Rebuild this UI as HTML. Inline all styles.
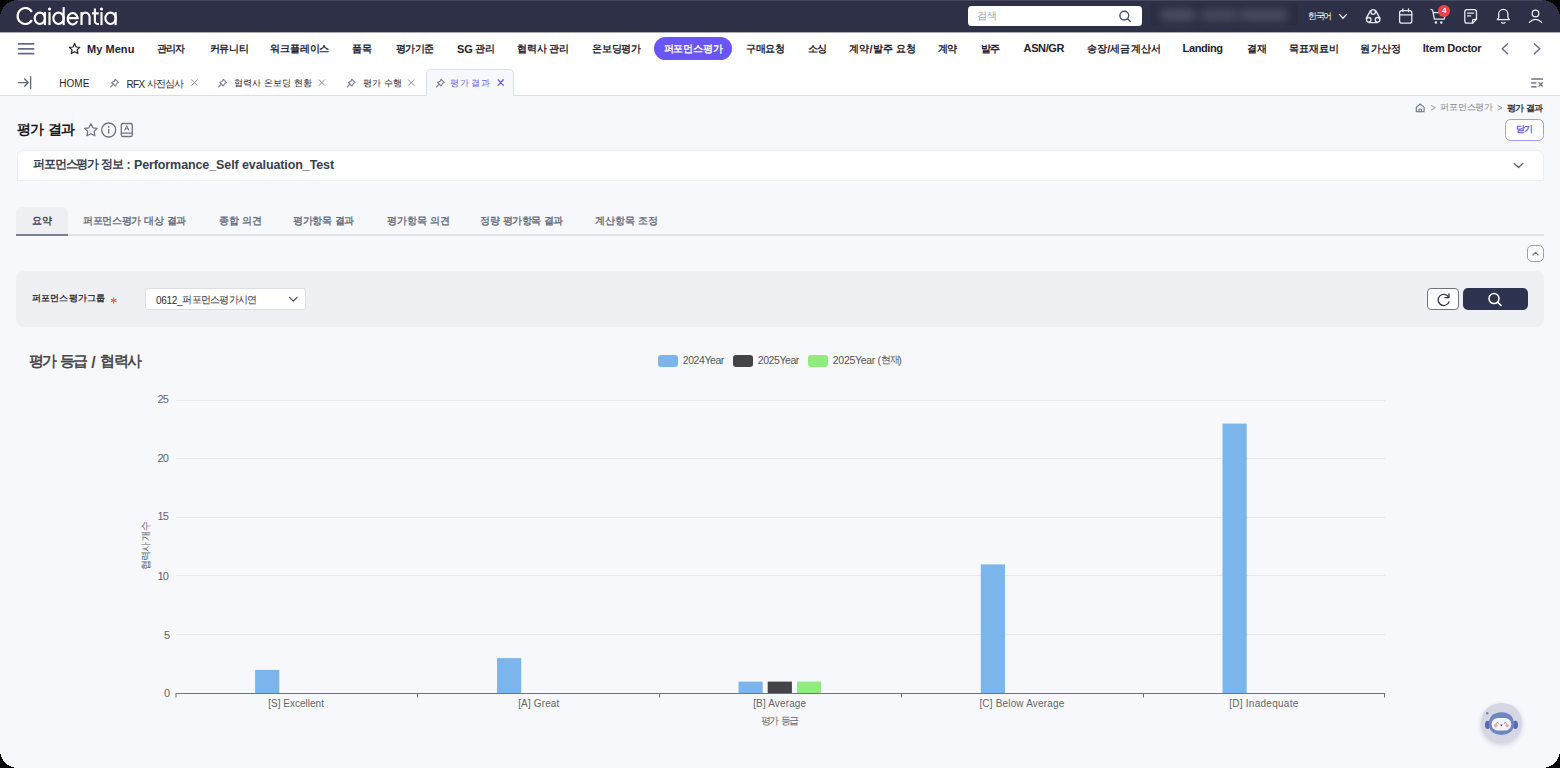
<!DOCTYPE html>
<html><head><meta charset="utf-8">
<style>
*{box-sizing:border-box;margin:0;padding:0}
html,body{width:1560px;height:768px;overflow:hidden;background:#000;font-family:"Liberation Sans",sans-serif;}
#app{position:absolute;left:0;top:0;width:1560px;height:768px;overflow:hidden;background:#f7f8fc;}
.a{position:absolute}
.t{position:absolute;white-space:nowrap;line-height:1.25}
svg{position:absolute;overflow:visible}
.k{vertical-align:0.1em}

</style></head>
<body>
<div id="app">
<!-- header -->
<div class="a" style="left:0;top:0;width:1560px;height:32px;background:#2e3047"></div>
<div class="a" style="left:18px;top:0;width:1524px;height:1px;background:#46485d"></div>
<div class="a" style="left:0;top:32px;width:1560px;height:1px;background:#a9abb6"></div>
<svg style="left:0;top:0" width="130" height="32" fill="none" stroke="#fff" stroke-width="2.15">
  <path d="M31.9 11.9 A7.7 7.95 0 1 0 31.9 20.1"/>
  <ellipse cx="39.8" cy="18.25" rx="5.1" ry="5.7"/>
  <line x1="44.9" y1="11.9" x2="44.9" y2="25.1"/>
  <line x1="49.5" y1="12.1" x2="49.5" y2="25.1"/>
  <circle cx="49.5" cy="9" r="1.55" fill="#fff" stroke="none"/>
  <ellipse cx="58.5" cy="18.25" rx="5.15" ry="5.7"/>
  <line x1="63.65" y1="7.1" x2="63.65" y2="25.1"/>
  <path d="M67.6 18.1 H77.65 A5 5.7 0 1 0 77.2 21.2"/>
  <path d="M81.5 11.9 V25.1 M81.5 17.2 A4.05 4.65 0 0 1 89.6 17.2 V25.1"/>
  <path d="M94.9 8.5 V21.2 A2.6 2.6 0 0 0 97.5 23.95 H98.9 M92 13.3 H98.7"/>
  <line x1="101.5" y1="12.1" x2="101.5" y2="25.1"/>
  <circle cx="101.5" cy="9" r="1.55" fill="#fff" stroke="none"/>
  <ellipse cx="110.5" cy="18.25" rx="5.15" ry="5.7"/>
  <line x1="115.65" y1="11.9" x2="115.65" y2="25.1"/>
</svg>
<!-- search -->
<div class="a" style="left:967.6px;top:6.3px;width:174px;height:19.7px;background:#fff;border-radius:3.5px"></div>
<svg style="left:0;top:0" width="1560" height="40">
  <circle cx="1124.3" cy="15.6" r="4.4" fill="none" stroke="#4a5060" stroke-width="1.4"/>
  <line x1="1127.5" y1="18.8" x2="1130.3" y2="21.6" stroke="#4a5060" stroke-width="1.4" stroke-linecap="round"/>
</svg>
<!-- blurred user -->
<div class="a" style="left:1151px;top:4px;width:147px;height:21px;background:#2b2d41"></div>
<div class="a" style="left:1160px;top:9px;width:36px;height:12px;background:#4c4e62;filter:blur(4px);border-radius:5px"></div>
<div class="a" style="left:1200px;top:9px;width:40px;height:12px;background:#46485c;filter:blur(4px);border-radius:5px"></div>
<div class="a" style="left:1240px;top:9px;width:48px;height:12px;background:#4a4c60;filter:blur(4px);border-radius:5px"></div>
<!-- header icons -->
<svg style="left:0;top:0" width="1560" height="40" fill="none" stroke="#fff" stroke-width="1.3" stroke-linecap="round" stroke-linejoin="round">
  <polyline points="1339.4,14.4 1343,18.2 1346.6,14.4" stroke="#e8e9ee"/>
  <!-- triad -->
  <circle cx="1373.1" cy="12" r="2.3" stroke="#e8e9ee"/>
  <circle cx="1368.75" cy="19.8" r="2.3" stroke="#e8e9ee"/>
  <circle cx="1377.5" cy="19.8" r="2.3" stroke="#e8e9ee"/>
  <path d="M1370.5 10.6 L1366.2 18.4 M1375.7 10.6 L1380 18.4 M1368.75 22.6 H1377.5" stroke="#e8e9ee"/>
  <!-- calendar -->
  <rect x="1399.6" y="10.6" width="12.2" height="12.6" rx="2.2" stroke="#e8e9ee"/>
  <line x1="1399.6" y1="14.8" x2="1411.8" y2="14.8" stroke="#e8e9ee"/>
  <line x1="1402.9" y1="9" x2="1402.9" y2="11.6" stroke="#e8e9ee"/>
  <line x1="1408.5" y1="9" x2="1408.5" y2="11.6" stroke="#e8e9ee"/>
  <!-- cart -->
  <polyline points="1431,9.5 1432.6,10 1434.4,19.2 1444.3,19.2 1445.4,12.6 1433.2,12.6" stroke="#e8e9ee"/>
  <circle cx="1435.9" cy="22.5" r="1.2" fill="#e8e9ee" stroke="none"/>
  <circle cx="1441.3" cy="22.5" r="1.2" fill="#e8e9ee" stroke="none"/>
  <!-- memo -->
  <path d="M1472.5 23.2 H1467 a2.2 2.2 0 0 1 -2.2 -2.2 V11.8 a2.2 2.2 0 0 1 2.2 -2.2 H1474.3 a2.2 2.2 0 0 1 2.2 2.2 V19.2 Z" stroke="#e8e9ee"/>
  <path d="M1472.5 23.2 V20.8 a1.4 1.4 0 0 1 1.4 -1.4 H1476.5" stroke="#e8e9ee"/>
  <line x1="1467.6" y1="13.2" x2="1473.6" y2="13.2" stroke="#e8e9ee"/>
  <line x1="1467.6" y1="15.9" x2="1470.6" y2="15.9" stroke="#e8e9ee"/>
  <!-- bell -->
  <path d="M1497.3 19.6 H1509.4 L1507.9 17.6 V13.9 a4.6 4.6 0 0 0 -9.2 0 V17.6 Z" stroke="#e8e9ee"/>
  <path d="M1501.6 22.4 Q1503.3 23.8 1505 22.4" stroke="#e8e9ee"/>
  <!-- person -->
  <circle cx="1535.5" cy="13.4" r="3.3" stroke="#e8e9ee"/>
  <path d="M1529.3 22.4 Q1535.5 16.2 1541.7 22.4" stroke="#e8e9ee"/>
</svg>
<div class="a" style="left:1438px;top:4.6px;width:12.4px;height:12.4px;border-radius:50%;background:#ef4444;color:#fff;font-size:8px;font-weight:bold;line-height:12.4px;text-align:center">4</div>

<!-- nav -->
<div class="a" style="left:0;top:33px;width:1560px;height:62px;background:#fff"></div>
<div class="a" style="left:0;top:95px;width:1560px;height:1px;background:#dcdee8"></div>
<svg style="left:0;top:0" width="1560" height="100" fill="none" stroke-linecap="round" stroke-linejoin="round">
  <g stroke="#646e82" stroke-width="1.8" stroke-linecap="round">
    <line x1="18.6" y1="43.9" x2="33.6" y2="43.9"/>
    <line x1="18.6" y1="48.8" x2="33.6" y2="48.8"/>
    <line x1="18.6" y1="53.7" x2="33.6" y2="53.7"/>
  </g>
  <path d="M74.6 43.6 L76.2 47 L79.8 47.4 L77.1 49.9 L77.9 53.5 L74.6 51.7 L71.3 53.5 L72.1 49.9 L69.4 47.4 L73 47 Z" stroke="#222" stroke-width="1.2"/>
  <polyline points="1507.6,43.8 1502.2,48.8 1507.6,53.8" stroke="#687084" stroke-width="1.5"/>
  <polyline points="1534.4,43.8 1539.8,48.8 1534.4,53.8" stroke="#687084" stroke-width="1.5"/>
</svg>
<div class="a" style="left:654px;top:37.3px;width:78px;height:23px;background:#6a56f6;border-radius:12px"></div>

<!-- tab row -->
<div class="a" style="left:425.5px;top:69.4px;width:88.2px;height:26.6px;background:#f7f8fc;border:1px solid #dcdfe8;border-bottom:none;border-radius:5px 5px 0 0"></div>
<svg style="left:0;top:0" width="1560" height="100" fill="none" stroke-linecap="round" stroke-linejoin="round">
  <g stroke="#5f6b7e" stroke-width="1.4">
    <line x1="18.5" y1="82.6" x2="28" y2="82.6"/>
    <polyline points="24.6,79 28.2,82.6 24.6,86.2"/>
    <line x1="30.6" y1="76.2" x2="30.6" y2="89.2" stroke-linecap="butt"/>
  </g>
  <g id="pin" stroke="#7a8294" stroke-width="1.1">
    <path d="M115.2 79.2 L118.6 82.6 L116.9 83.2 L115.3 86 L111.8 82.5 L114.6 80.9 Z"/>
    <line x1="113.4" y1="84.2" x2="110.6" y2="87"/>
  </g>
  <use href="#pin" x="108"/>
  <use href="#pin" x="236.6"/>
  <use href="#pin" x="325.8"/>
  <g stroke="#858c9c" stroke-width="1">
    <path d="M191.6 79.8 L197.2 85.4 M197.2 79.8 L191.6 85.4"/>
    <path d="M319.1 79.8 L324.7 85.4 M324.7 79.8 L319.1 85.4"/>
    <path d="M408.4 79.8 L414 85.4 M414 79.8 L408.4 85.4"/>
  </g>
  <path d="M498.1 79.8 L503.3 85.4 M503.3 79.8 L498.1 85.4" stroke="#6b5cf0" stroke-width="1.3"/>
  <g stroke="#6b7385" stroke-width="1.5" stroke-linecap="butt">
    <line x1="1531.2" y1="79" x2="1543" y2="79"/>
    <line x1="1531.2" y1="82.9" x2="1536.5" y2="82.9"/>
    <line x1="1531.2" y1="86.8" x2="1536.5" y2="86.8"/>
    <path d="M1538.6 82.2 L1542.8 86.6 M1542.8 82.2 L1538.6 86.6" stroke-width="1.3"/>
  </g>
</svg>

<!-- page header -->
<svg style="left:0;top:0" width="1560" height="200" fill="none" stroke-linecap="round" stroke-linejoin="round">
  <g stroke="#6b7385" stroke-width="1.3">
    <path d="M90.9 123.8 L92.9 127.8 L97.2 128.4 L94.1 131.4 L94.8 135.8 L90.9 133.7 L87 135.8 L87.7 131.4 L84.6 128.4 L88.9 127.8 Z"/>
    <circle cx="108.7" cy="130" r="7"/>
    <line x1="108.7" y1="129.4" x2="108.7" y2="133"/>
    <circle cx="108.7" cy="126.9" r="0.85" fill="#6b7385" stroke="none"/>
    <rect x="121.3" y="123.5" width="11" height="13" rx="1.5"/>
    <line x1="121.3" y1="133.2" x2="132.3" y2="133.2"/>
    <path d="M124.8 130.2 L126.8 125.6 L128.8 130.2 M125.5 128.8 H128.1" stroke-width="1"/>
  </g>
  <!-- breadcrumb home -->
  <path d="M1416.3 107.4 L1420.2 104 L1424.1 107.4 V111.8 H1416.3 Z" stroke="#6b7385" stroke-width="1.1"/>
  <path d="M1418.9 111.8 V109 H1421.5 V111.8" stroke="#6b7385" stroke-width="1"/>
  <polyline points="1431.3,105.6 1435.3,107.8 1431.3,110" stroke="#8a8f99" stroke-width="0.9"/>
  <polyline points="1498,105.6 1502,107.8 1498,110" stroke="#8a8f99" stroke-width="0.9"/>
</svg>
<div class="a" style="left:1505.3px;top:118.8px;width:38.4px;height:22.5px;background:#fff;border:1.5px solid #a898f8;border-radius:5.5px"></div>

<!-- info panel -->
<div class="a" style="left:16.5px;top:150px;width:1527px;height:31px;background:#fff;border:1px solid #eceef3;border-radius:7px 7px 0 0"></div>
<svg style="left:0;top:0" width="1560" height="200" fill="none" stroke-linecap="round" stroke-linejoin="round">
  <polyline points="1514.2,163.4 1518.5,167.6 1522.8,163.4" stroke="#5f6b7e" stroke-width="1.4"/>
</svg>

<!-- sub tabs -->
<div class="a" style="left:16px;top:206.6px;width:51.6px;height:28.4px;background:#eff0f4;border-radius:6px 6px 0 0"></div>
<div class="a" style="left:16px;top:234px;width:1528px;height:2px;background:#e2e3e8"></div>
<div class="a" style="left:16px;top:234px;width:51.6px;height:2px;background:#7a8194"></div>
<div class="a" style="left:1527.2px;top:245px;width:16.6px;height:16.7px;background:#fff;border:1px solid #9aa2b4;border-radius:5px"></div>
<svg style="left:0;top:0" width="1560" height="300" fill="none" stroke-linecap="round" stroke-linejoin="round">
  <polyline points="1532.9,255 1535.5,252.3 1538.1,255" stroke="#6b7385" stroke-width="1.1"/>
</svg>

<!-- filter -->
<div class="a" style="left:16px;top:271.3px;width:1528px;height:56px;background:#eff0f4;border-radius:8px"></div>
<div class="a" style="left:145px;top:288.2px;width:161.4px;height:21.5px;background:#fff;border:1px solid #dcdfe6;border-radius:3px"></div>
<div class="a" style="left:1427px;top:287.6px;width:32px;height:22.9px;background:#fff;border:1px solid #6b7385;border-radius:4px"></div>
<div class="a" style="left:1462.5px;top:287.6px;width:65px;height:22.9px;background:#2e3450;border-radius:5px"></div>
<svg style="left:0;top:0" width="1560" height="340" fill="none" stroke-linecap="round" stroke-linejoin="round">
  <g stroke="#ef4444" stroke-width="1">
    <line x1="113.7" y1="297.8" x2="113.7" y2="303.2"/>
    <line x1="111.2" y1="299.4" x2="116.2" y2="301.6"/>
    <line x1="116.2" y1="299.4" x2="111.2" y2="301.6"/>
  </g>
  <polyline points="289.5,297.3 293.3,301.1 297.1,297.3" stroke="#3a3f4d" stroke-width="1.1"/>
  <path d="M1448.6 297.2 A5.6 5.6 0 1 0 1449 301.8" stroke="#2e3450" stroke-width="1.3"/>
  <polyline points="1444.9,297.6 1448.9,297.6 1448.9,293.8" stroke="#2e3450" stroke-width="1.3"/>
  <circle cx="1494" cy="298.6" r="5" stroke="#fff" stroke-width="1.5"/>
  <line x1="1497.6" y1="302.2" x2="1501" y2="305.4" stroke="#fff" stroke-width="1.5"/>
</svg>

<!-- legend -->
<div class="a" style="left:657.7px;top:355px;width:20.3px;height:11.5px;background:#7cb5ec;border-radius:3px"></div>
<div class="a" style="left:733.2px;top:355px;width:19.6px;height:11.5px;background:#434348;border-radius:3px"></div>
<div class="a" style="left:807.7px;top:355px;width:20.3px;height:11.5px;background:#90ed7d;border-radius:3px"></div>

<!-- chart -->
<svg style="left:0;top:0" width="1560" height="768">
  <g fill="#e4e7f0">
    <rect x="176" y="400" width="1209" height="1"/>
    <rect x="176" y="458" width="1209" height="1"/>
    <rect x="176" y="517" width="1209" height="1"/>
    <rect x="176" y="575" width="1209" height="1"/>
    <rect x="176" y="634" width="1209" height="1"/>
  </g>
  <g fill="#7cb5ec">
    <rect x="255.1" y="669.9" width="24.2" height="23.4"/>
    <rect x="497" y="658.1" width="24.2" height="35.2"/>
    <rect x="738.5" y="681.6" width="24.2" height="11.7"/>
    <rect x="980.8" y="564.4" width="24.2" height="128.9"/>
    <rect x="1222.5" y="423.6" width="24.2" height="269.7"/>
  </g>
  <rect x="767.7" y="681.6" width="24.2" height="11.7" fill="#434348"/>
  <rect x="797" y="681.6" width="24.2" height="11.7" fill="#90ed7d"/>
  <g stroke="#707380" stroke-width="1">
    <line x1="175.6" y1="693.5" x2="1385" y2="693.5"/>
    <line x1="176" y1="693.5" x2="176" y2="697.5"/>
    <line x1="417.5" y1="693.5" x2="417.5" y2="697.5"/>
    <line x1="659.5" y1="693.5" x2="659.5" y2="697.5"/>
    <line x1="901.5" y1="693.5" x2="901.5" y2="697.5"/>
    <line x1="1143.5" y1="693.5" x2="1143.5" y2="697.5"/>
    <line x1="1384.5" y1="693.5" x2="1384.5" y2="697.5"/>
  </g>
</svg>
<div class="a" style="left:145.5px;top:545.5px;width:0;height:0">
  <div style="position:absolute;left:-30px;top:-7px;width:60px;height:14px;transform:rotate(-90deg);font-size:10px;color:#666;text-align:center;line-height:14px;white-space:nowrap;letter-spacing:-0.9px">협력사 개수</div>
</div>

<!-- chatbot -->
<div class="a" style="left:1481.1px;top:702.7px;width:40.6px;height:40.6px;border-radius:50%;background:#d5d8e3;box-shadow:0 2px 5px rgba(40,45,70,0.18)"></div>
<svg style="left:0;top:0" width="1560" height="768">
  <circle cx="1487.3" cy="713.3" r="1.3" fill="#6f86c4"/>
  <ellipse cx="1487.6" cy="724.9" rx="2.6" ry="4.1" fill="#5b6ab6"/>
  <ellipse cx="1515.4" cy="724.9" rx="2.6" ry="4.1" fill="#5b6ab6"/>
  <path d="M1501.4 712.3 C1509.8 712.3 1514 717.5 1514 723.6 C1514 730.6 1509.5 734.9 1501.4 734.9 C1493.3 734.9 1488.8 730.6 1488.8 723.6 C1488.8 717.5 1493 712.3 1501.4 712.3 Z" fill="#6f86c4"/>
  <rect x="1491.6" y="718" width="19.6" height="12.6" rx="6.3" fill="#f5f5f7"/>
  <circle cx="1495.6" cy="725.6" r="1.8" fill="#f7a1b6"/>
  <circle cx="1507.2" cy="725.6" r="1.8" fill="#f7a1b6"/>
  <path d="M1500.2 724.6 L1502.6 724.6 L1501.4 726.4 Z" fill="#3a3f4d"/>
  <path d="M1496.2 723.4 q1.3 -1.6 2.6 0 M1504 723.4 q1.3 -1.6 2.6 0" stroke="#6b7080" stroke-width="0.9" fill="none"/>
</svg>
<!-- corners -->
<svg style="left:0;top:0" width="1560" height="768" shape-rendering="crispEdges">
  <path d="M0 0 H18 A18 18 0 0 0 0 18 Z" fill="#000"/>
  <path d="M1560 0 H1542 A18 18 0 0 1 1560 18 Z" fill="#000"/>
  <path d="M0 768 H18 A18 18 0 0 1 0 750 Z" fill="#000"/>
  <path d="M1560 768 H1542 A18 18 0 0 0 1560 750 Z" fill="#000"/>
</svg>

<div class="t" id="t0" style="left:976.60px;top:9.55px;font-size:11px;font-weight:normal;color:#9aa0ab;letter-spacing:0.000px;"><span class="k" style="font-size:10px;letter-spacing:0.200px">검색</span></div>
<div class="t" id="t1" style="left:1307.60px;top:9.95px;font-size:11px;font-weight:normal;color:#ffffff;letter-spacing:0.000px;"><span class="k" style="font-size:9px;letter-spacing:-1.050px">한국어</span></div>
<div class="t" id="t2" style="left:87.00px;top:42.78px;font-size:11px;font-weight:bold;color:#1f2430;letter-spacing:0.050px;">My Menu</div>
<div class="t" id="t3" style="left:156.60px;top:43.37px;font-size:11px;font-weight:bold;color:#1f2430;letter-spacing:0.000px;"><span class="k" style="font-size:10px;letter-spacing:-0.700px">관리자</span></div>
<div class="t" id="t4" style="left:209.60px;top:43.37px;font-size:11px;font-weight:bold;color:#1f2430;letter-spacing:0.000px;"><span class="k" style="font-size:10px;letter-spacing:-0.167px">커뮤니티</span></div>
<div class="t" id="t5" style="left:270.40px;top:43.37px;font-size:11px;font-weight:bold;color:#1f2430;letter-spacing:0.000px;"><span class="k" style="font-size:10px;letter-spacing:-0.220px">워크플레이스</span></div>
<div class="t" id="t6" style="left:352.40px;top:43.37px;font-size:11px;font-weight:bold;color:#1f2430;letter-spacing:0.000px;"><span class="k" style="font-size:10px;letter-spacing:-0.500px">품목</span></div>
<div class="t" id="t7" style="left:395.60px;top:43.37px;font-size:11px;font-weight:bold;color:#1f2430;letter-spacing:0.000px;"><span class="k" style="font-size:10px;letter-spacing:-0.467px">평가기준</span></div>
<div class="t" id="t8" style="left:457.00px;top:43.37px;font-size:11px;font-weight:bold;color:#1f2430;letter-spacing:-0.200px;">SG <span class="k" style="font-size:10px;letter-spacing:-0.800px">관리</span></div>
<div class="t" id="t9" style="left:517.00px;top:43.37px;font-size:11px;font-weight:bold;color:#1f2430;letter-spacing:0.000px;"><span class="k" style="font-size:10px;letter-spacing:-0.200px">협력사</span> <span class="k" style="font-size:10px;letter-spacing:-0.200px">관리</span></div>
<div class="t" id="t10" style="left:592.00px;top:43.37px;font-size:11px;font-weight:bold;color:#1f2430;letter-spacing:0.000px;"><span class="k" style="font-size:10px;letter-spacing:-0.250px">온보딩평가</span></div>
<div class="t" id="t11" style="left:745.80px;top:43.37px;font-size:11px;font-weight:bold;color:#1f2430;letter-spacing:0.000px;"><span class="k" style="font-size:10px;letter-spacing:-0.267px">구매요청</span></div>
<div class="t" id="t12" style="left:807.80px;top:43.37px;font-size:11px;font-weight:bold;color:#1f2430;letter-spacing:0.000px;"><span class="k" style="font-size:10px;letter-spacing:-0.400px">소싱</span></div>
<div class="t" id="t13" style="left:849.40px;top:43.37px;font-size:11px;font-weight:bold;color:#1f2430;letter-spacing:0.000px;"><span class="k" style="font-size:10px;letter-spacing:0.020px">계약</span>/<span class="k" style="font-size:10px;letter-spacing:0.020px">발주</span> <span class="k" style="font-size:10px;letter-spacing:0.020px">요청</span></div>
<div class="t" id="t14" style="left:938.00px;top:43.37px;font-size:11px;font-weight:bold;color:#1f2430;letter-spacing:0.000px;"><span class="k" style="font-size:10px;letter-spacing:-0.900px">계약</span></div>
<div class="t" id="t15" style="left:980.60px;top:43.37px;font-size:11px;font-weight:bold;color:#1f2430;letter-spacing:0.000px;"><span class="k" style="font-size:10px;letter-spacing:-0.900px">발주</span></div>
<div class="t" id="t16" style="left:1023.60px;top:42.37px;font-size:11px;font-weight:bold;color:#1f2430;letter-spacing:-0.380px;">ASN/GR</div>
<div class="t" id="t17" style="left:1087.20px;top:43.37px;font-size:11px;font-weight:bold;color:#1f2430;letter-spacing:0.000px;"><span class="k" style="font-size:10px;letter-spacing:0.067px">송장</span>/<span class="k" style="font-size:10px;letter-spacing:0.067px">세금계산서</span></div>
<div class="t" id="t18" style="left:1182.60px;top:42.37px;font-size:11px;font-weight:bold;color:#1f2430;letter-spacing:-0.383px;">Landing</div>
<div class="t" id="t19" style="left:1246.80px;top:43.37px;font-size:11px;font-weight:bold;color:#1f2430;letter-spacing:0.000px;"><span class="k" style="font-size:10px;letter-spacing:-0.100px">결재</span></div>
<div class="t" id="t20" style="left:1289.00px;top:43.37px;font-size:11px;font-weight:bold;color:#1f2430;letter-spacing:0.000px;"><span class="k" style="font-size:10px;letter-spacing:-0.025px">목표재료비</span></div>
<div class="t" id="t21" style="left:1360.20px;top:43.37px;font-size:11px;font-weight:bold;color:#1f2430;letter-spacing:0.000px;"><span class="k" style="font-size:10px;letter-spacing:0.400px">원가산정</span></div>
<div class="t" id="t22" style="left:1422.80px;top:42.37px;font-size:11px;font-weight:bold;color:#1f2430;letter-spacing:-0.230px;">Item Doctor</div>
<div class="t" id="t23" style="left:663.60px;top:42.37px;font-size:11.5px;font-weight:bold;color:#ffffff;letter-spacing:0.000px;"><span class="k" style="font-size:10px;letter-spacing:-0.200px">퍼포먼스평가</span></div>
<div class="t" id="t24" style="left:59.20px;top:77.50px;font-size:10px;font-weight:normal;color:#1f2430;letter-spacing:0.067px;">HOME</div>
<div class="t" id="t25" style="left:126.40px;top:77.50px;font-size:10px;font-weight:normal;color:#1f2430;letter-spacing:-0.600px;">RFX <span class="k" style="font-size:10px;letter-spacing:-1.000px">사전심사</span></div>
<div class="t" id="t26" style="left:234.00px;top:77.50px;font-size:10px;font-weight:normal;color:#1f2430;letter-spacing:0.000px;"><span class="k" style="font-size:9px;letter-spacing:0.000px">협력사</span> <span class="k" style="font-size:9px;letter-spacing:0.000px">온보딩</span> <span class="k" style="font-size:9px;letter-spacing:0.000px">현황</span></div>
<div class="t" id="t27" style="left:362.60px;top:77.50px;font-size:10px;font-weight:normal;color:#1f2430;letter-spacing:0.000px;"><span class="k" style="font-size:9px;letter-spacing:0.367px">평가</span> <span class="k" style="font-size:9px;letter-spacing:0.367px">수행</span></div>
<div class="t" id="t28" style="left:450.40px;top:77.50px;font-size:10px;font-weight:normal;color:#6b5cf0;letter-spacing:0.000px;"><span class="k" style="font-size:9px;letter-spacing:0.133px">평가</span> <span class="k" style="font-size:9px;letter-spacing:0.133px">결과</span></div>
<div class="t" id="t29" style="left:16.60px;top:119.45px;font-size:17px;font-weight:bold;color:#1a1a1a;letter-spacing:0.000px;"><span class="k" style="font-size:14px;letter-spacing:-0.700px">평가</span> <span class="k" style="font-size:14px;letter-spacing:-0.700px">결과</span></div>
<div class="t" id="t30" style="left:1440.40px;top:102.10px;font-size:10px;font-weight:normal;color:#80838b;letter-spacing:0.000px;"><span class="k" style="font-size:9px;letter-spacing:-0.240px">퍼포먼스평가</span></div>
<div class="t" id="t31" style="left:1507.00px;top:103.10px;font-size:10px;font-weight:bold;color:#333333;letter-spacing:0.000px;"><span class="k" style="font-size:9px;letter-spacing:-0.800px">평가</span> <span class="k" style="font-size:9px;letter-spacing:-0.800px">결과</span></div>
<div class="t" id="t32" style="left:1515.60px;top:123.33px;font-size:10.5px;font-weight:bold;color:#6a56f0;letter-spacing:0.000px;"><span class="k" style="font-size:9px;letter-spacing:-0.400px">닫기</span></div>
<div class="t" id="t33" style="left:33.00px;top:157.22px;font-size:12.5px;font-weight:bold;color:#3a3f4d;letter-spacing:-0.100px;"><span class="k" style="font-size:12px;letter-spacing:-1.163px">퍼포먼스평가</span> <span class="k" style="font-size:12px;letter-spacing:-1.163px">정보</span> : Performance_Self evaluation_Test</div>
<div class="t" id="t34" style="left:32.00px;top:213.97px;font-size:11.5px;font-weight:bold;color:#3c4150;letter-spacing:0.000px;"><span class="k" style="font-size:10px;letter-spacing:-0.500px">요약</span></div>
<div class="t" id="t35" style="left:83.00px;top:213.97px;font-size:11.5px;font-weight:bold;color:#6b7180;letter-spacing:0.000px;"><span class="k" style="font-size:10px;letter-spacing:-0.333px">퍼포먼스평가</span> <span class="k" style="font-size:10px;letter-spacing:-0.333px">대상</span> <span class="k" style="font-size:10px;letter-spacing:-0.333px">결과</span></div>
<div class="t" id="t36" style="left:219.40px;top:213.97px;font-size:11.5px;font-weight:bold;color:#6b7180;letter-spacing:0.000px;"><span class="k" style="font-size:10px;letter-spacing:-0.267px">종합</span> <span class="k" style="font-size:10px;letter-spacing:-0.267px">의견</span></div>
<div class="t" id="t37" style="left:293.00px;top:213.97px;font-size:11.5px;font-weight:bold;color:#6b7180;letter-spacing:0.000px;"><span class="k" style="font-size:10px;letter-spacing:-0.360px">평가항목</span> <span class="k" style="font-size:10px;letter-spacing:-0.360px">결과</span></div>
<div class="t" id="t38" style="left:387.00px;top:213.97px;font-size:11.5px;font-weight:bold;color:#6b7180;letter-spacing:0.000px;"><span class="k" style="font-size:10px;letter-spacing:-0.020px">평가항목</span> <span class="k" style="font-size:10px;letter-spacing:-0.020px">의견</span></div>
<div class="t" id="t39" style="left:480.40px;top:213.97px;font-size:11.5px;font-weight:bold;color:#6b7180;letter-spacing:0.000px;"><span class="k" style="font-size:10px;letter-spacing:-0.500px">정량</span> <span class="k" style="font-size:10px;letter-spacing:-0.500px">평가항목</span> <span class="k" style="font-size:10px;letter-spacing:-0.500px">결과</span></div>
<div class="t" id="t40" style="left:595.20px;top:213.97px;font-size:11.5px;font-weight:bold;color:#6b7180;letter-spacing:0.000px;"><span class="k" style="font-size:10px;letter-spacing:-0.100px">계산항목</span> <span class="k" style="font-size:10px;letter-spacing:-0.100px">조정</span></div>
<div class="t" id="t41" style="left:32.00px;top:291.72px;font-size:10.5px;font-weight:bold;color:#333333;letter-spacing:0.000px;"><span class="k" style="font-size:9px;letter-spacing:0.143px">퍼포먼스평가그룹</span></div>
<div class="t" id="t42" style="left:156.00px;top:293.52px;font-size:10px;font-weight:normal;color:#2a2e38;letter-spacing:-0.300px;">0612_<span class="k" style="font-size:10px;letter-spacing:-0.743px">퍼포먼스평가시연</span></div>
<div class="t" id="t43" style="left:28.60px;top:352.40px;font-size:16px;font-weight:bold;color:#4a4a4a;letter-spacing:0.000px;"><span class="k" style="font-size:15px;letter-spacing:-1.550px">평가</span> <span class="k" style="font-size:15px;letter-spacing:-1.550px">등급</span> / <span class="k" style="font-size:15px;letter-spacing:-1.550px">협력사</span></div>
<div class="t" id="t44" style="left:682.80px;top:353.92px;font-size:10.5px;font-weight:normal;color:#555555;letter-spacing:-0.429px;">2024Year</div>
<div class="t" id="t45" style="left:757.80px;top:353.92px;font-size:10.5px;font-weight:normal;color:#555555;letter-spacing:-0.429px;">2025Year</div>
<div class="t" id="t46" style="left:832.80px;top:353.92px;font-size:10.5px;font-weight:normal;color:#555555;letter-spacing:-0.300px;">2025Year (<span class="k" style="font-size:10px;letter-spacing:-1.250px">현재</span>)</div>
<div class="t" id="t47" style="left:157.60px;top:393.15px;font-size:11px;font-weight:normal;color:#666666;letter-spacing:-0.900px;">25</div>
<div class="t" id="t48" style="left:157.60px;top:451.95px;font-size:11px;font-weight:normal;color:#666666;letter-spacing:-0.900px;">20</div>
<div class="t" id="t49" style="left:157.60px;top:510.15px;font-size:11px;font-weight:normal;color:#666666;letter-spacing:-0.900px;">15</div>
<div class="t" id="t50" style="left:157.60px;top:570.35px;font-size:11px;font-weight:normal;color:#666666;letter-spacing:-0.900px;">10</div>
<div class="t" id="t51" style="left:164.00px;top:628.95px;font-size:11px;font-weight:normal;color:#666666;letter-spacing:0.000px;">5</div>
<div class="t" id="t52" style="left:164.00px;top:687.15px;font-size:11px;font-weight:normal;color:#666666;letter-spacing:0.000px;">0</div>
<div class="t" id="t53" style="left:268.20px;top:698.10px;font-size:10px;font-weight:normal;color:#666666;letter-spacing:0.017px;">[S] Excellent</div>
<div class="t" id="t54" style="left:518.20px;top:698.10px;font-size:10px;font-weight:normal;color:#666666;letter-spacing:0.138px;">[A] Great</div>
<div class="t" id="t55" style="left:753.20px;top:698.10px;font-size:10px;font-weight:normal;color:#666666;letter-spacing:0.140px;">[B] Average</div>
<div class="t" id="t56" style="left:979.40px;top:698.10px;font-size:10px;font-weight:normal;color:#666666;letter-spacing:0.175px;">[C] Below Average</div>
<div class="t" id="t57" style="left:1229.20px;top:698.10px;font-size:10px;font-weight:normal;color:#666666;letter-spacing:0.269px;">[D] Inadequate</div>
<div class="t" id="t58" style="left:760.80px;top:714.50px;font-size:10px;font-weight:normal;color:#666666;letter-spacing:0.000px;"><span class="k" style="font-size:10px;letter-spacing:-1.400px">평가</span> <span class="k" style="font-size:10px;letter-spacing:-1.400px">등급</span></div>
</div>
</body></html>
